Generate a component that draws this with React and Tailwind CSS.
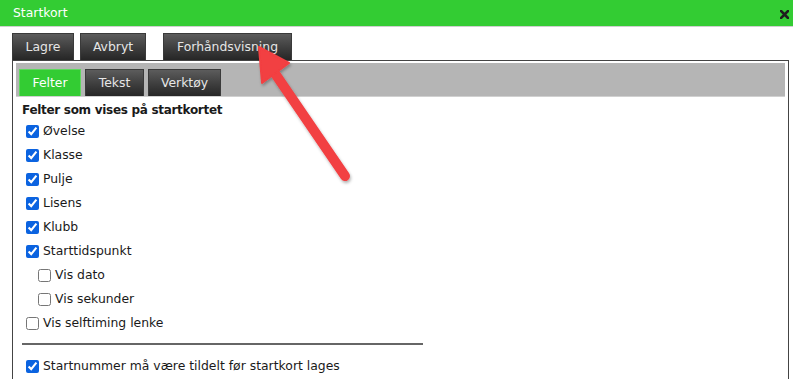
import React from "react";

const font = { fontFamily: '"DejaVu Sans", Verdana, sans-serif' };

function Btn({ children, className = "" }) {
  return (
    <div
      className={
        "h-[27px] flex items-center justify-center border border-b-0 border-[#3a3a3a] bg-gradient-to-b from-[#5c5c5c] to-[#262626] text-[#e6e6e6] text-[12.4px] " +
        className
      }
    >
      {children}
    </div>
  );
}

function Tab({ children, active, className = "" }) {
  return (
    <div
      className={
        "h-[27px] flex items-center justify-center border border-b-0 text-[12.4px] " +
        (active
          ? "bg-[#33cc33] border-[#5fd85f] text-white "
          : "bg-gradient-to-b from-[#5c5c5c] to-[#262626] border-[#3a3a3a] text-[#e6e6e6] ") +
        className
      }
    >
      {children}
    </div>
  );
}

function Row({ label, checked, indent }) {
  return (
    <label className={"h-[24px] flex items-center text-[12.4px] text-[#1a1a1a] " + (indent ? "pl-[16px]" : "pl-[4px]")}>
      <input
        type="checkbox"
        defaultChecked={checked}
        className="w-[13px] h-[13px] m-0 mr-[4px] accent-[#0b63e0]"
      />
      <span>{label}</span>
    </label>
  );
}

export default function App() {
  return (
    <div className="relative w-[793px] h-[379px] bg-white overflow-hidden" style={font}>
      <div className="h-[27px] bg-[#33cc33] border-b border-[#cfcfcf] flex items-center justify-between pl-[13px] pr-[4px]">
        <span className="text-white text-[12.4px]">Startkort</span>
        <svg width="9" height="9" viewBox="0 0 9 9" className="mt-[2px]">
          <path d="M1 1 L8 8 M8 1 L1 8" stroke="#1e1e1e" strokeWidth="2.6" strokeLinecap="square" />
        </svg>
      </div>
      <div className="pl-[12px] pr-[4px] pt-[6px]">
        <div className="flex items-end h-[27px]">
          <Btn className="w-[62px]">Lagre</Btn>
          <Btn className="w-[66px] ml-[6px]">Avbryt</Btn>
          <Btn className="w-[129px] ml-[17px]">Forhåndsvisning</Btn>
        </div>
        <div className="border border-[#444] px-[3px] pt-[2px] h-[330px]">
          <div className="h-[34px] bg-[#b5b5b5] border-b border-[#d0d0d0] flex items-end pl-[3px] gap-[4px]">
            <Tab active className="w-[62px]">Felter</Tab>
            <Tab className="w-[59px]">Tekst</Tab>
            <Tab className="w-[73px]">Verktøy</Tab>
          </div>
          <div className="pl-[6px] pt-[3px]">
            <div className="h-[19px] flex items-center text-[12px] font-bold tracking-[-0.3px] text-[#1a1a1a]">
              Felter som vises på startkortet
            </div>
            <Row label="Øvelse" checked />
            <Row label="Klasse" checked />
            <Row label="Pulje" checked />
            <Row label="Lisens" checked />
            <Row label="Klubb" checked />
            <Row label="Starttidspunkt" checked />
            <Row label="Vis dato" indent />
            <Row label="Vis sekunder" indent />
            <Row label="Vis selftiming lenke" />
            <div className="w-[401px] h-[2px] bg-[#666] mt-[8px] mb-[9px]" />
            <Row label="Startnummer må være tildelt før startkort lages" checked />
          </div>
        </div>
      </div>
      <svg className="absolute left-0 top-0 pointer-events-none" width="793" height="379">
        <defs>
          <filter id="sh" x="-20%" y="-20%" width="140%" height="140%">
            <feDropShadow dx="1" dy="2" stdDeviation="1.5" floodColor="#000" floodOpacity="0.3" />
          </filter>
        </defs>
        <g filter="url(#sh)">
          <line x1="274" y1="72" x2="345" y2="176" stroke="#f23f42" strokeWidth="10" strokeLinecap="round" />
          <polygon points="259,47 289,63 262,83" fill="#f23f42" stroke="#f23f42" strokeWidth="2" strokeLinejoin="round" />
        </g>
      </svg>
    </div>
  );
}
